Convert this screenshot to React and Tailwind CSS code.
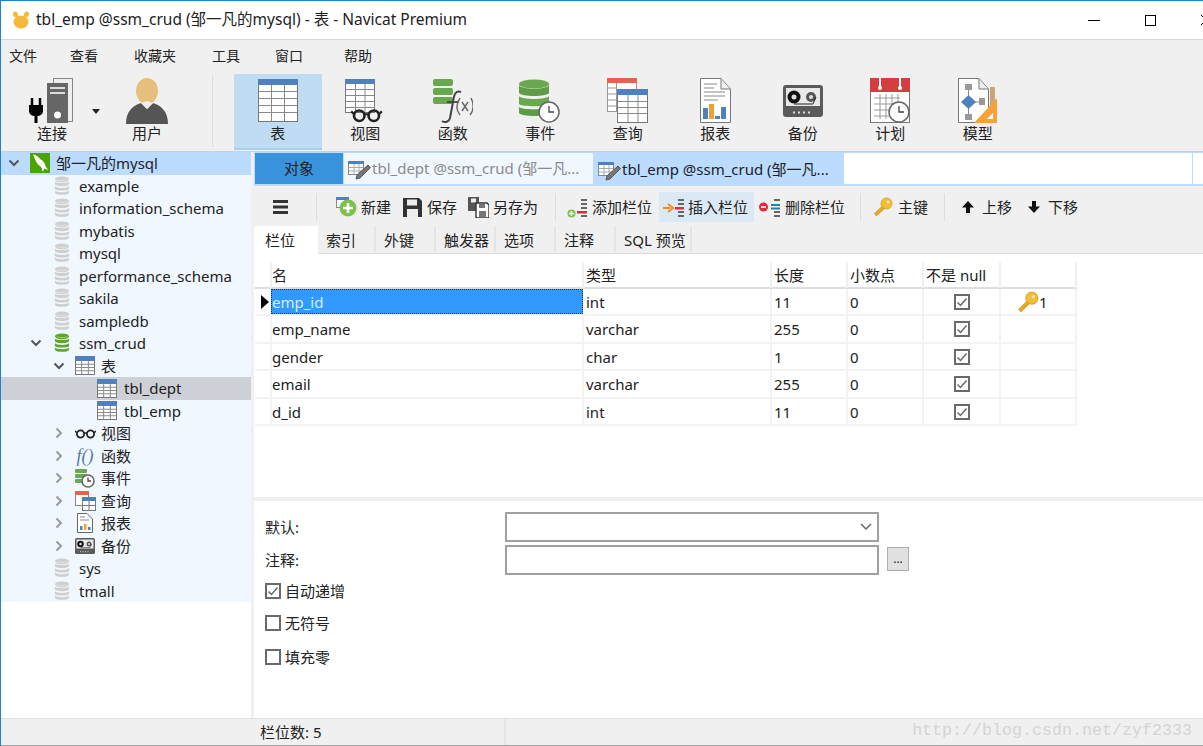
import React from 'react'

const TREE_LEVELS = ['pl-[5px]', 'pl-[27px]', 'pl-[50px]', 'pl-[72px]']

function Db({ color = '#cfcfcf', dark = '#fff', w = 18, h = 20 }) {
  return (
    <svg width={w} height={h} viewBox="0 0 20 24">
      <ellipse cx="10" cy="4" rx="8.5" ry="3.5" fill={color} />
      <path d="M1.5 6.5C3 9 17 9 18.5 6.5V10C17 13 3 13 1.5 10Z" fill={color} />
      <path d="M1.5 12C3 15 17 15 18.5 12V15.5C17 18 3 18 1.5 15.5Z" fill={color} />
      <path d="M1.5 17.5C3 20 17 20 18.5 17.5V20C17 23.5 3 23.5 1.5 20Z" fill={color} />
      <path d="M4 4.5C7 6 13 6 16 4.5" stroke={dark} strokeOpacity=".5" fill="none" />
    </svg>
  )
}

function GridIcon({ w = 20, h = 20, head = '#4f81bd', rows = 4, cols = 3 }) {
  const lines = []
  for (let i = 1; i < rows; i++) lines.push(<path key={'r' + i} d={`M1 ${5 + (i * (h - 6)) / rows}H${w - 1}`} stroke="#8a8a8a" />)
  for (let i = 1; i < cols; i++) lines.push(<path key={'c' + i} d={`M${(i * w) / cols} 5V${h - 1}`} stroke="#8a8a8a" />)
  return (
    <svg width={w} height={h} viewBox={`0 0 ${w} ${h}`}>
      <rect x=".5" y=".5" width={w - 1} height={h - 1} fill="#fff" stroke="#777" />
      <rect x="0" y="0" width={w} height="5" fill={head} />
      {lines}
    </svg>
  )
}

function Chevron({ open, light }) {
  return (
    <svg width="12" height="12" viewBox="0 0 12 12">
      {open ? (
        <path d="M1.5 3.5L6 8L10.5 3.5" fill="none" stroke="#555" strokeWidth="2" />
      ) : (
        <path d="M3.5 1.5L8 6L3.5 10.5" fill="none" stroke={light ? '#9a9a9a' : '#555'} strokeWidth="2" />
      )}
    </svg>
  )
}

function Logo() {
  return (
    <svg width="20" height="20" viewBox="0 0 20 20">
      <rect width="20" height="20" fill="#4aa500" />
      <path d="M3 1.5C6 2 8 3.5 10 6C13 7.5 15 10 15.5 13L18 17L14.5 15.5C14 17 13 18 12 18.5C12.5 16 12 14.5 10 13C7 11.5 5.5 7 3 1.5Z" fill="#fff" />
    </svg>
  )
}

function Glasses({ w = 21, h = 11 }) {
  return (
    <svg width={w} height={h} viewBox="0 0 21 11">
      <circle cx="5.5" cy="6" r="3.6" fill="none" stroke="#222" strokeWidth="1.8" />
      <circle cx="15.5" cy="6" r="3.6" fill="none" stroke="#222" strokeWidth="1.8" />
      <path d="M9 5H12M2 5L0 3M19 5L21 3" stroke="#222" strokeWidth="1.5" />
    </svg>
  )
}

function Clock({ x, y, r }) {
  return (
    <g>
      <circle cx={x} cy={y} r={r} fill="#fff" stroke="#666" strokeWidth="1.5" />
      <path d={`M${x} ${y - r * 0.6}V${y}H${x + r * 0.5}`} fill="none" stroke="#444" strokeWidth="1.3" />
    </g>
  )
}

function SmallEvent() {
  return (
    <svg width="20" height="20" viewBox="0 0 20 20">
      <rect x="0" y="1" width="12" height="4" rx="1" fill="#6aa84f" />
      <rect x="0" y="6" width="12" height="4" rx="1" fill="#6aa84f" />
      <rect x="0" y="11" width="12" height="4" rx="1" fill="#6aa84f" />
      <Clock x={13} y={13} r={6} />
    </svg>
  )
}

function SmallQuery() {
  return (
    <svg width="21" height="20" viewBox="0 0 21 20">
      <rect x=".5" y=".5" width="13" height="14" fill="#fff" stroke="#888" />
      <rect width="14" height="4" fill="#e0654a" />
      <rect x="7.5" y="6.5" width="13" height="13" fill="#fff" stroke="#777" />
      <rect x="7" y="6" width="14" height="4" fill="#4f81bd" />
      <path d="M14 10V19M8 14.5H20" stroke="#777" />
    </svg>
  )
}

function SmallReport() {
  return (
    <svg width="16" height="20" viewBox="0 0 16 20">
      <path d="M.5.5H10L15.5 6V19.5H.5Z" fill="#fff" stroke="#666" />
      <path d="M3 4H8M3 7H12" stroke="#888" />
      <rect x="3" y="13" width="2.5" height="4" fill="#4f81bd" />
      <rect x="7" y="11" width="2.5" height="6" fill="#f0a030" />
      <rect x="11" y="14" width="2.5" height="3" fill="#4f81bd" />
    </svg>
  )
}

function Cassette({ w = 20, h = 18 }) {
  return (
    <svg width={w} height={h} viewBox="0 0 40 32">
      <rect width="40" height="32" rx="3" fill="#5a5a5a" />
      <rect x="3" y="3" width="34" height="18" fill="#e8e8e8" />
      <circle cx="11" cy="12" r="6.5" fill="#111" />
      <circle cx="11" cy="12" r="2.5" fill="#ddd" />
      <circle cx="28" cy="12" r="5" fill="#555" />
      <circle cx="28" cy="12" r="2" fill="#ddd" />
      <path d="M11 19H30L33 12" fill="none" stroke="#222" />
      <path d="M10 27.5H30" stroke="#ddd" strokeWidth="2" strokeDasharray="2 3" />
    </svg>
  )
}

function Check({ checked }) {
  return (
    <span className="flex items-center justify-center bg-white border-2 border-[#6a6a6a] w-[16px] h-[16px]">
      {checked && (
        <svg width="12" height="12" viewBox="0 0 12 12">
          <path d="M1.5 6.5L4.5 9.5L10.5 2.5" fill="none" stroke="#6a6a6a" strokeWidth="1.5" />
        </svg>
      )}
    </span>
  )
}

function Key({ size = 20 }) {
  return (
    <svg width={size} height={size} viewBox="0 0 20 20">
      <path d="M10.5 8L1.5 16.5L3.5 19L12 11" fill="#e8a820" stroke="#c98a10" strokeWidth=".6" />
      <circle cx="13.5" cy="6.5" r="5.5" fill="#f3bd35" stroke="#d09a18" strokeWidth=".8" />
      <circle cx="15" cy="5" r="1.4" fill="#fff3c8" />
    </svg>
  )
}

/* 工具栏大图标 */
const bigIcons = {
  table: (
    <svg width="40" height="43" viewBox="0 0 40 43">
      <rect x=".5" y=".5" width="39" height="42" fill="#fff" stroke="#777" />
      <rect width="40" height="6" fill="#4f81bd" />
      <path d="M1 12.5H39M1 19.5H39M1 26.5H39M1 33.5H39M13.5 6V42M26.5 6V42" stroke="#8a8a8a" />
    </svg>
  ),
  view: (
    <div className="relative w-[40px] h-[43px]">
      <svg width="30" height="34" viewBox="0 0 30 34">
        <rect x=".5" y=".5" width="29" height="33" fill="#fff" stroke="#777" />
        <rect width="30" height="5" fill="#4f81bd" />
        <path d="M1 10.5H29M1 16.5H29M1 22.5H29M1 28.5H29M10.5 5V33M20 5V33" stroke="#8a8a8a" />
      </svg>
      <div className="absolute left-[3px] top-[28px]">
        <Glasses w={37} h={16} />
      </div>
    </div>
  ),
  func: (
    <svg width="40" height="46" viewBox="0 0 40 46">
      <rect x="0" y="1" width="20" height="7" rx="2" fill="#6aa84f" />
      <rect x="0" y="10" width="20" height="7" rx="2" fill="#6aa84f" />
      <rect x="0" y="19" width="20" height="7" rx="2" fill="#6aa84f" />
      <path d="M28 14C23 12 21 16 20 24L17 40C16 44 12 45 9 43" fill="none" stroke="#444" strokeWidth="2" />
      <path d="M14 24H26" stroke="#444" strokeWidth="1.8" />
      <path d="M27 20C23 26 23 32 27 37M38 20C41 26 41 32 37 37M29 24L35 33M35 24L29 33" fill="none" stroke="#666" strokeWidth="1.4" />
    </svg>
  ),
  event: (
    <svg width="42" height="44" viewBox="0 0 42 44">
      <ellipse cx="15" cy="5" rx="15" ry="4.5" fill="#6aa84f" />
      <path d="M0 6C2 11 28 11 30 6V14C28 18 2 18 0 14Z" fill="#5f9c48" />
      <path d="M0 17C2 21 28 21 30 17V25C28 28 2 28 0 25Z" fill="#6aa84f" />
      <path d="M0 28C2 31 28 31 30 28V34C28 38 2 38 0 34Z" fill="#5f9c48" />
      <Clock x={30} y={33} r={10} />
    </svg>
  ),
  query: (
    <svg width="41" height="45" viewBox="0 0 41 45">
      <rect x=".5" y=".5" width="29" height="33" fill="#fff" stroke="#999" />
      <rect width="30" height="5" fill="#e0654a" />
      <path d="M1 10H10M1 16H10M1 22H10M1 28H10M9.5 5V33" stroke="#999" />
      <rect x="10.5" y="11.5" width="30" height="33" fill="#fff" stroke="#777" />
      <rect x="10" y="11" width="31" height="6" fill="#4f81bd" />
      <path d="M11 23.5H40M11 29.5H40M11 35.5H40M21 17V44M31 17V44" stroke="#8a8a8a" />
    </svg>
  ),
  report: (
    <svg width="31" height="45" viewBox="0 0 31 45">
      <path d="M.5.5H21L30.5 11V44.5H.5Z" fill="#fff" stroke="#777" />
      <path d="M21 1V11H30" fill="#eee" stroke="#777" />
      <path d="M4 6H17M4 10H14M4 14H25M4 18H25M4 22H18" stroke="#888" />
      <rect x="3" y="30" width="5" height="11" fill="#4f81bd" />
      <rect x="9" y="26" width="5" height="15" fill="#f0a030" />
      <rect x="15" y="38" width="5" height="3" fill="#4f81bd" />
      <rect x="21" y="29" width="5" height="12" fill="#4f81bd" />
    </svg>
  ),
  backup: <Cassette w={40} h={32} />,
  schedule: (
    <svg width="41" height="46" viewBox="0 0 41 46">
      <rect x=".5" y=".5" width="39" height="44" fill="#fff" stroke="#777" />
      <rect width="40" height="14" fill="#d33f3f" />
      <path d="M10 0V9M30 0V9" stroke="#fff" strokeWidth="2" />
      <circle cx="10" cy="10" r="2" fill="#fff" />
      <circle cx="30" cy="10" r="2" fill="#fff" />
      <path d="M4 20H30M4 26H28M4 32H24M4 38H24M10 16V41M16 16V41M22 16V41M28 16V28" stroke="#999" />
      <Clock x={29} y={34} r={10} />
    </svg>
  ),
  model: (
    <svg width="40" height="46" viewBox="0 0 40 46">
      <path d="M.5.5H21L30.5 11V44.5H.5Z" fill="#fff" stroke="#777" />
      <path d="M21 1V11H30" fill="#eee" stroke="#777" />
      <rect x="7" y="6" width="7" height="6" fill="#999" />
      <path d="M10.5 12V18M10.5 30V36M16 24H22" stroke="#888" />
      <path d="M10.5 17L18 24L10.5 31L3 24Z" fill="#4f81bd" />
      <rect x="21" y="20" width="6" height="7" fill="#999" />
      <rect x="7" y="36" width="7" height="6" fill="#999" />
      <rect x="32" y="9" width="5" height="24" fill="#c9a675" />
      <path d="M39 20V45H16Z" fill="#f6a13a" />
      <path d="M35 35V41H29Z" fill="#fff" />
    </svg>
  ),
}

const toolbarItems = [
  { key: 'table', label: '表', active: true },
  { key: 'view', label: '视图' },
  { key: 'func', label: '函数' },
  { key: 'event', label: '事件' },
  { key: 'query', label: '查询' },
  { key: 'report', label: '报表' },
  { key: 'backup', label: '备份' },
  { key: 'schedule', label: '计划' },
  { key: 'model', label: '模型' },
]

function ToolItem({ icon, label, active, width = 'w-[88px]' }) {
  return (
    <div className={`flex flex-col items-center h-[76px] shrink-0 ${width} ${active ? 'bg-[#bfdcf3] border-b-2 border-[#a9cfee]' : ''}`}>
      <div className="h-[49px] mt-[2px] flex items-center justify-center">{icon}</div>
      <span className="mt-[-3px] text-[15px] leading-[22px]">{label}</span>
    </div>
  )
}

const treeRows = [
  { level: 0, open: true, icon: <Logo />, label: '邹一凡的mysql', bg: 'bg-[#bbdcff]', cjk: true },
  { level: 1, icon: <Db />, label: 'example' },
  { level: 1, icon: <Db />, label: 'information_schema' },
  { level: 1, icon: <Db />, label: 'mybatis' },
  { level: 1, icon: <Db />, label: 'mysql' },
  { level: 1, icon: <Db />, label: 'performance_schema' },
  { level: 1, icon: <Db />, label: 'sakila' },
  { level: 1, icon: <Db />, label: 'sampledb' },
  { level: 1, open: true, icon: <Db color="#5fa52e" />, label: 'ssm_crud' },
  { level: 2, open: true, icon: <GridIcon w={20} h={19} />, label: '表', cjk: true },
  { level: 3, icon: <GridIcon w={20} h={19} />, label: 'tbl_dept', bg: 'bg-[#cdd0d6]' },
  { level: 3, icon: <GridIcon w={20} h={19} />, label: 'tbl_emp' },
  { level: 2, closed: true, icon: <Glasses />, label: '视图', cjk: true },
  {
    level: 2,
    closed: true,
    icon: <span className="font-['Liberation_Serif',serif] italic text-[18px] leading-none text-[#5a7aa0]">f()</span>,
    label: '函数',
    cjk: true,
  },
  { level: 2, closed: true, icon: <SmallEvent />, label: '事件', cjk: true },
  { level: 2, closed: true, icon: <SmallQuery />, label: '查询', cjk: true },
  { level: 2, closed: true, icon: <SmallReport />, label: '报表', cjk: true },
  { level: 2, closed: true, icon: <Cassette />, label: '备份', cjk: true },
  { level: 1, icon: <Db />, label: 'sys' },
  { level: 1, icon: <Db />, label: 'tmall' },
]

function TreeRow({ row }) {
  return (
    <div className={`flex items-center h-[22.5px] whitespace-nowrap ${TREE_LEVELS[row.level]} ${row.bg || ''}`}>
      <span className="w-[16px] flex justify-center shrink-0">
        {row.open && <Chevron open />}
        {row.closed && <Chevron light />}
      </span>
      <span className={`w-[24px] ml-[6px] flex justify-center items-center shrink-0 ${row.cjk ? 'mr-[4px]' : 'mr-[5px]'}`}>{row.icon}</span>
      <span>{row.label}</span>
    </div>
  )
}

function EditTabIcon() {
  return (
    <svg width="24" height="22" viewBox="0 0 24 22">
      <rect x=".5" y="3.5" width="15" height="13" fill="#fff" stroke="#888" />
      <rect y="3" width="16" height="3" fill="#4f81bd" />
      <path d="M1 9.5H15M1 13H15M6 6V16M11 6V16" stroke="#aaa" />
      <path d="M20 7L22.5 9.5L12 20L8 21L9 17Z" fill="#777" stroke="#555" />
    </svg>
  )
}

function Sep() {
  return <span className="w-px h-[28px] bg-[#dcdcdc] shrink-0" />
}

function Btn({ icon, label, className = '' }) {
  return (
    <div className={`flex items-center h-[30px] shrink-0 whitespace-nowrap ${className}`}>
      {icon}
      <span>{label}</span>
    </div>
  )
}

const columns = [
  { name: 'emp_id', type: 'int', len: '11', key: true },
  { name: 'emp_name', type: 'varchar', len: '255' },
  { name: 'gender', type: 'char', len: '1' },
  { name: 'email', type: 'varchar', len: '255' },
  { name: 'd_id', type: 'int', len: '11' },
]

const GRID = 'grid grid-cols-[15px_314px_188px_76px_76px_77px_76px] w-[822px]'
const tabs = ['索引', '外键', '触发器', '选项', '注释']

export default function App() {
  return (
    <div className="relative w-[1203px] h-[746px] overflow-hidden flex flex-col bg-white border-t border-l border-[#1883d7] text-[15px] text-[#222] font-['Noto_Sans','Noto_Sans_CJK_SC',sans-serif]">
      {/* 标题栏 */}
      <div className="h-[39px] shrink-0 flex items-center border-b border-[#d9d9d9] relative">
        <svg className="ml-[11px]" width="18" height="18" viewBox="0 0 18 18">
          <ellipse cx="9" cy="11" rx="7.5" ry="6.5" fill="#f4b93a" />
          <ellipse cx="3.5" cy="3.5" rx="2.5" ry="3" fill="#f4b93a" transform="rotate(-20 3.5 3.5)" />
          <ellipse cx="14.5" cy="3.5" rx="2.5" ry="3" fill="#f4b93a" transform="rotate(20 14.5 3.5)" />
        </svg>
        <span className="ml-[6px] text-[15.5px] whitespace-nowrap">tbl_emp @ssm_crud (邹一凡的mysql) - 表 - Navicat Premium</span>
        <div className="ml-auto flex items-center">
          <span className="w-[12px] h-px bg-black mr-[45px]" />
          <span className="w-[11px] h-[11px] border border-black mr-[44px]" />
          <svg className="mr-[-9px]" width="12" height="12" viewBox="0 0 12 12">
            <path d="M1 1L11 11M11 1L1 11" stroke="#000" />
          </svg>
        </div>
      </div>

      {/* 菜单 */}
      <div className="h-[32px] shrink-0 bg-[#f0f0f0] flex items-center text-[14px] pl-[8px] pb-[2px]">
        <span className="w-[61px]">文件</span>
        <span className="w-[64px]">查看</span>
        <span className="w-[78px]">收藏夹</span>
        <span className="w-[63px]">工具</span>
        <span className="w-[69px]">窗口</span>
        <span>帮助</span>
      </div>

      {/* 工具栏 */}
      <div className="h-[80px] shrink-0 bg-[#f0f0f0] flex items-start border-b border-[#d0d0d0] pl-[7px] pt-[2px]">
        <ToolItem
          label="连接"
          icon={
            <svg width="46" height="46" viewBox="0 0 46 46">
              <rect x="24.5" y=".5" width="19" height="43" fill="#eee" stroke="#888" />
              <rect x="18" y="5" width="21" height="40" fill="#666" />
              <rect x="21" y="9" width="15" height="2" fill="#ddd" />
              <rect x="21" y="14" width="15" height="2" fill="#ddd" />
              <circle cx="28.5" cy="37" r="3.5" fill="#fff" />
              <path d="M3 20V28M11 20V28" stroke="#000" strokeWidth="2.5" />
              <path d="M0 27H14V33C14 37 10 38 8.5 38V45H5.5V38C4 38 0 37 0 33Z" fill="#000" />
            </svg>
          }
        />
        <svg className="mt-[35px] ml-[-4px] mr-[3px]" width="8" height="5" viewBox="0 0 8 5">
          <path d="M0 0H8L4 5Z" fill="#222" />
        </svg>
        <ToolItem
          label="用户"
          icon={
            <svg width="42" height="46" viewBox="0 0 42 46">
              <ellipse cx="21" cy="13" rx="11" ry="13" fill="#e6bf7c" />
              <path d="M0 46C0 34 6 28 15 25L21 31L27 25C36 28 42 34 42 46Z" fill="#555" />
              <path d="M15 25L21 31L27 25L21 23Z" fill="#eee" />
            </svg>
          }
        />
        <span className="w-px h-[72px] mt-[1px] ml-[21px] mr-[21px] bg-[#dcdcdc] shrink-0" />
        {toolbarItems.map((item) => (
          <ToolItem key={item.key} icon={bigIcons[item.key]} label={item.label} active={item.active} width="w-[87.5px]" />
        ))}
      </div>

      {/* 主体 */}
      <div className="flex-1 min-h-0 flex">
        <div className="w-[250px] shrink-0 bg-white">
          <div className="bg-[#f0f7ff]">
            {treeRows.map((row) => (
              <TreeRow key={row.level + row.label} row={row} />
            ))}
          </div>
        </div>
        <div className="w-[3px] shrink-0 bg-[#f0f0f0]" />
        <div className="flex-1 min-w-0 flex flex-col">
          {/* 标签页 */}
          <div className="h-[34px] shrink-0 bg-[#bbdcff] flex items-start pt-px pl-px whitespace-nowrap text-[15px]">
            <div className="w-[88px] h-[31px] bg-[#3a93dd] flex items-center justify-center mr-px">对象</div>
            <div className="w-[249px] h-[31px] bg-[#f0f7ff] flex items-center pl-[4px] text-[#8a8a8a] mr-px">
              <EditTabIcon />
              <span>tbl_dept @ssm_crud (邹一凡...</span>
            </div>
            <div className="w-[250px] h-[33px] flex items-center pl-[4px]">
              <EditTabIcon />
              <span>tbl_emp @ssm_crud (邹一凡...</span>
            </div>
            <div className="w-[348px] h-[31px] bg-white mr-px" />
            <div className="flex-1 h-[31px] bg-white" />
          </div>

          {/* 字段工具栏 */}
          <div className="h-[40px] shrink-0 bg-[#f0f0f0] flex items-center pl-[18px] pt-[2px]">
            <svg className="mr-[27px]" width="17" height="16" viewBox="0 0 17 16">
              <path d="M1 2.5H16M1 8H16M1 13.5H16" stroke="#333" strokeWidth="3" />
            </svg>
            <Sep />
            <Btn
              className="ml-[19px] mr-[12px]"
              label="新建"
              icon={
                <svg className="mr-[4px]" width="21" height="20" viewBox="0 0 21 20">
                  <rect x=".5" y=".5" width="12" height="10" fill="#fff" stroke="#888" />
                  <rect width="13" height="3" fill="#4f81bd" />
                  <circle cx="12" cy="11" r="8.5" fill="#7cc24a" />
                  <path d="M12 6V16M7 11H17" stroke="#fff" strokeWidth="2.6" />
                </svg>
              }
            />
            <Btn
              className="mr-[11px]"
              label="保存"
              icon={
                <svg className="mr-[5px]" width="19" height="19" viewBox="0 0 19 19">
                  <path d="M0 0H16L19 3V19H0Z" fill="#333" />
                  <rect x="4" y="1.5" width="10" height="6" fill="#eee" />
                  <rect x="4" y="11" width="11" height="8" fill="#eee" />
                </svg>
              }
            />
            <Btn
              className="mr-[17px]"
              label="另存为"
              icon={
                <svg className="mr-[4px]" width="21" height="21" viewBox="0 0 21 21">
                  <path d="M0 0H11V14H0Z" fill="#555" />
                  <rect x="3" y="1.5" width="5" height="4" fill="#eee" />
                  <path d="M8 6H19L21 8V21H8Z" fill="#fff" stroke="#333" strokeWidth="1.4" />
                  <rect x="11" y="7" width="6" height="4" fill="#777" />
                  <rect x="11" y="14" width="7" height="6" fill="#777" />
                </svg>
              }
            />
            <Sep />
            <Btn
              className="ml-[11px] mr-[7px]"
              label="添加栏位"
              icon={
                <svg className="mr-[4px]" width="21" height="21" viewBox="0 0 21 21">
                  <path d="M14 2H20V4H14ZM14 6H20V8H14ZM14 10H20V12H14ZM14 18H20V20H14Z" fill="#666" />
                  <rect x="10" y="14" width="10" height="2.5" fill="#e02b3c" />
                  <circle cx="4.5" cy="16.5" r="4" fill="#7cc24a" />
                  <path d="M4.5 14V19M2 16.5H7" stroke="#fff" strokeWidth="1.4" />
                </svg>
              }
            />
            <Btn
              className="bg-[#dbe9f5] w-[95px] pl-[4px] mr-[5px]"
              label="插入栏位"
              icon={
                <svg className="mr-[4px]" width="21" height="21" viewBox="0 0 21 21">
                  <path d="M15 2H21V4H15ZM15 6H21V8H15ZM15 14H21V16H15ZM15 18H21V20H15Z" fill="#666" />
                  <rect x="12" y="10" width="9" height="2.5" fill="#e02b3c" />
                  <path d="M0 11H7M5 7L10 11L5 15" fill="none" stroke="#f08a1d" strokeWidth="2" />
                </svg>
              }
            />
            <Btn
              className="mr-[15px]"
              label="删除栏位"
              icon={
                <svg className="mr-[5px]" width="21" height="21" viewBox="0 0 21 21">
                  <path d="M15 2H21V4H15ZM15 14H21V16H15ZM15 18H21V20H15Z" fill="#666" />
                  <path d="M12 7H21V9H12ZM12 10.5H21V12.5H12Z" fill="#1b86a8" />
                  <circle cx="4.5" cy="10" r="4.5" fill="#e02b3c" />
                  <path d="M2 10H7" stroke="#fff" strokeWidth="1.6" />
                </svg>
              }
            />
            <Sep />
            <Btn className="ml-[12px] mr-[16px]" label="主键" icon={<span className="mr-[5px] flex"><Key /></span>} />
            <Sep />
            <Btn
              className="ml-[16px] mr-[15px]"
              label="上移"
              icon={
                <svg className="mr-[7px]" width="14" height="14" viewBox="0 0 14 14">
                  <path d="M7 1L13 7.5H9V13H5V7.5H1Z" fill="#111" />
                </svg>
              }
            />
            <Btn
              label="下移"
              icon={
                <svg className="mr-[7px]" width="14" height="14" viewBox="0 0 14 14">
                  <path d="M7 13L13 6.5H9V1H5V6.5H1Z" fill="#111" />
                </svg>
              }
            />
          </div>

          {/* 子标签 */}
          <div className="h-[28px] shrink-0 bg-[#f0f0f0] flex border-b border-[#dcdcdc] whitespace-nowrap">
            <div className="w-[64px] h-[28px] bg-white pl-[11px] leading-[28px]">栏位</div>
            {tabs.map((t) => (
              <div
                key={t}
                className={`h-[26px] leading-[28px] pl-[8px] border-r-2 border-[#e4e4e4] ${t === '索引' ? 'w-[58px]' : 'w-[60px]'}`}
              >
                {t}
              </div>
            ))}
            <div className="w-[76px] h-[26px] leading-[28px] pl-[8px] border-r-2 border-[#e4e4e4]">SQL 预览</div>
          </div>

          {/* 字段表格 */}
          <div className="h-[243px] shrink-0 pt-[8px] pl-px">
            <div className={`${GRID} h-[27px] border-b-2 border-[#dedede]`}>
              <div />
              <div className="border-r-2 border-l-2 border-[#f0f0f0] leading-[26px]">名</div>
              <div className="border-r-2 border-[#f0f0f0] pl-[2px] leading-[26px]">类型</div>
              <div className="border-r-2 border-[#f0f0f0] pl-[2px] leading-[26px]">长度</div>
              <div className="border-r-2 border-[#f0f0f0] pl-[2px] leading-[26px]">小数点</div>
              <div className="border-r-2 border-[#f0f0f0] pl-[2px] leading-[26px] whitespace-nowrap">不是 null</div>
              <div className="border-r-2 border-[#f0f0f0]" />
            </div>
            {columns.map((c) => (
              <div key={c.name} className={`${GRID} h-[27.4px] border-b-2 border-[#f3f3f3]`}>
                <div className="flex items-center justify-end pr-px">
                  {c.key && (
                    <svg width="8" height="14" viewBox="0 0 8 14">
                      <path d="M0 0L8 7L0 14Z" fill="#000" />
                    </svg>
                  )}
                </div>
                {c.key ? (
                  <div className="ml-px bg-[#3399ff] border border-dotted border-[#12335a] text-[#d9ecff] leading-[24px] w-[312px] h-[25px]">
                    {c.name}
                  </div>
                ) : (
                  <div className="border-x-2 border-[#f3f3f3] leading-[26px]">{c.name}</div>
                )}
                <div className="border-r-2 border-[#f3f3f3] pl-[2px] leading-[26px]">{c.type}</div>
                <div className="border-r-2 border-[#f3f3f3] pl-[2px] leading-[26px]">{c.len}</div>
                <div className="border-r-2 border-[#f3f3f3] pl-[2px] leading-[26px]">0</div>
                <div className="border-r-2 border-[#f3f3f3] flex items-center justify-center">
                  <Check checked />
                </div>
                <div className="border-r-2 border-[#f3f3f3] flex items-center pl-[16px]">
                  {c.key && (
                    <>
                      <Key size={22} />
                      <span>1</span>
                    </>
                  )}
                </div>
              </div>
            ))}
          </div>

          <div className="h-[4px] shrink-0 bg-[#f0f0f0]" />

          {/* 属性区 */}
          <div className="flex-1 min-h-0 relative">
            <div className="flex items-start pt-[11px] pl-[11px]">
              <div className="flex flex-col w-[240px]">
                <span className="h-[33px] leading-[30px]">默认:</span>
                <span className="h-[30px] leading-[30px]">注释:</span>
              </div>
              <div className="flex flex-col gap-[3px] w-[374px]">
                <div className="h-[30px] border-2 border-[#a0a0a0] flex items-center justify-end pr-[5px]">
                  <svg width="12" height="8" viewBox="0 0 12 8">
                    <path d="M1 1L6 6L11 1" fill="none" stroke="#666" strokeWidth="1.5" />
                  </svg>
                </div>
                <div className="h-[30px] border-2 border-[#a0a0a0]" />
              </div>
              <div className="w-[22px] h-[24px] mt-[35px] ml-[8px] bg-[#e1e1e1] border border-[#adadad] text-[12px] leading-[22px] text-center">
                ...
              </div>
            </div>
            <div className="flex flex-col pl-[11px] mt-[6px]">
              <div className="flex items-center gap-[4px] h-[20px]">
                <Check checked />
                <span>自动递增</span>
              </div>
              <div className="flex items-center gap-[4px] h-[20px] mt-[12px]">
                <Check />
                <span>无符号</span>
              </div>
              <div className="flex items-center gap-[4px] h-[20px] mt-[14px]">
                <Check />
                <span>填充零</span>
              </div>
            </div>
          </div>
        </div>
      </div>

      {/* 状态栏 */}
      <div className="h-[28px] shrink-0 bg-[#f0f0f0] border-t border-b border-t-[#e0e0e0] border-b-[#a0a0a0] flex items-center">
        <div className="w-[253px]" />
        <div className="w-[252px] pl-[6px] h-full leading-[26px] border-r-2 border-[#e4e4e4]">栏位数: 5</div>
      </div>

      <span className="absolute right-[11px] bottom-[6px] text-[16.67px] leading-none text-[#d4d4d4] font-['Liberation_Mono',monospace] whitespace-nowrap">
        http://blog.csdn.net/zyf2333
      </span>
    </div>
  )
}
